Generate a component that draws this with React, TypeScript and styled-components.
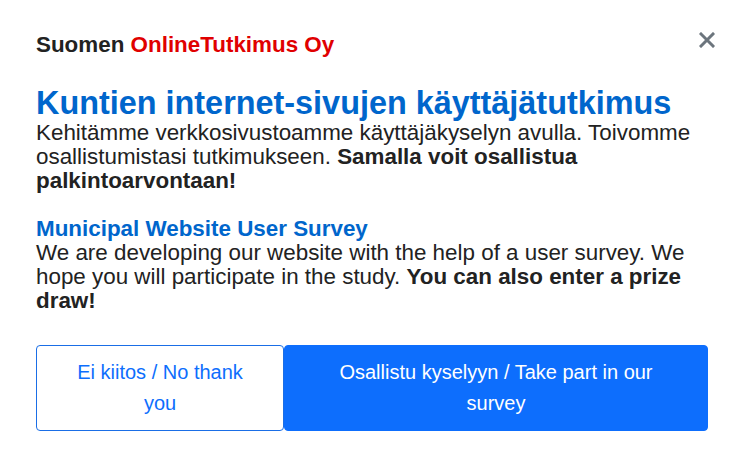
import React from 'react';
import styled, { createGlobalStyle } from 'styled-components';

const GlobalStyle = createGlobalStyle`
  html, body {
    margin: 0;
    padding: 0;
    background: #fff;
  }
  body {
    font-family: "Liberation Sans", Arial, sans-serif;
    color: #222;
  }
`;

const Dialog = styled.div`
  position: relative;
  width: 744px;
  height: 466px;
  box-sizing: border-box;
  padding: 32px 36px 0 36px;
  background: #fff;
`;

const Brand = styled.div`
  font-size: 22.4px;
  font-weight: bold;
  line-height: 26px;
  color: #222;
`;

const BrandAccent = styled.span`
  color: #e00000;
`;

const CloseButton = styled.button`
  position: absolute;
  top: 29px;
  right: 26px;
  width: 22px;
  height: 22px;
  padding: 0;
  border: 0;
  background: none;
  cursor: pointer;
  display: flex;
  align-items: center;
  justify-content: center;
`;

const Title = styled.h1`
  margin: 27px 0 0 0;
  font-size: 32.4px;
  line-height: 36px;
  font-weight: bold;
  color: #0066cc;
`;

const Paragraph = styled.p`
  margin: 0;
  font-size: 22.4px;
  line-height: 24px;
  color: #222;
`;

const SubTitle = styled.h2<{ $gap: number }>`
  margin: ${p => p.$gap}px 0 0 0;
  font-size: 22.4px;
  line-height: 24px;
  font-weight: bold;
  color: #0066cc;
`;

const Actions = styled.div`
  display: flex;
  margin-top: 32px;
`;

const Button = styled.button<{ $primary?: boolean }>`
  box-sizing: border-box;
  font-family: "Liberation Sans", Arial, sans-serif;
  font-size: 20px;
  line-height: 31px;
  padding: 11px 24px;
  border-radius: 4px;
  border: 1px solid ${p => (p.$primary ? '#0d6efd' : '#1a6ee6')};
  cursor: pointer;
  text-align: center;
  background: ${p => (p.$primary ? '#0d6efd' : '#fff')};
  color: ${p => (p.$primary ? '#fff' : '#0d6efd')};
  flex: ${p => (p.$primary ? '1 1 auto' : '0 0 248px')};
`;

const CloseIcon = () => (
  <svg width="16" height="16" viewBox="0 0 16 16">
    <path d="M2 2 L14 14 M14 2 L2 14" stroke="#6c757d" strokeWidth="3" strokeLinecap="square" />
  </svg>
);

const App: React.FC = () => {
  return (
    <>
      <GlobalStyle />
      <Dialog>
        <Brand>
          Suomen <BrandAccent>OnlineTutkimus Oy</BrandAccent>
        </Brand>
        <CloseButton type="button" aria-label="Sulje">
          <CloseIcon />
        </CloseButton>
        <Title>Kuntien internet-sivujen käyttäjätutkimus</Title>
        <Paragraph>
          Kehitämme verkkosivustoamme käyttäjäkyselyn avulla. Toivomme osallistumistasi
          tutkimukseen. <strong>Samalla voit osallistua palkintoarvontaan!</strong>
        </Paragraph>
        <SubTitle $gap={24}>Municipal Website User Survey</SubTitle>
        <Paragraph>
          We are developing our website with the help of a user survey. We hope you will
          participate in the study. <strong>You can also enter a prize draw!</strong>
        </Paragraph>
        <Actions>
          <Button type="button">Ei kiitos / No thank you</Button>
          <Button type="button" $primary>
            Osallistu kyselyyn / Take part in our survey
          </Button>
        </Actions>
      </Dialog>
    </>
  );
};

export default App;
